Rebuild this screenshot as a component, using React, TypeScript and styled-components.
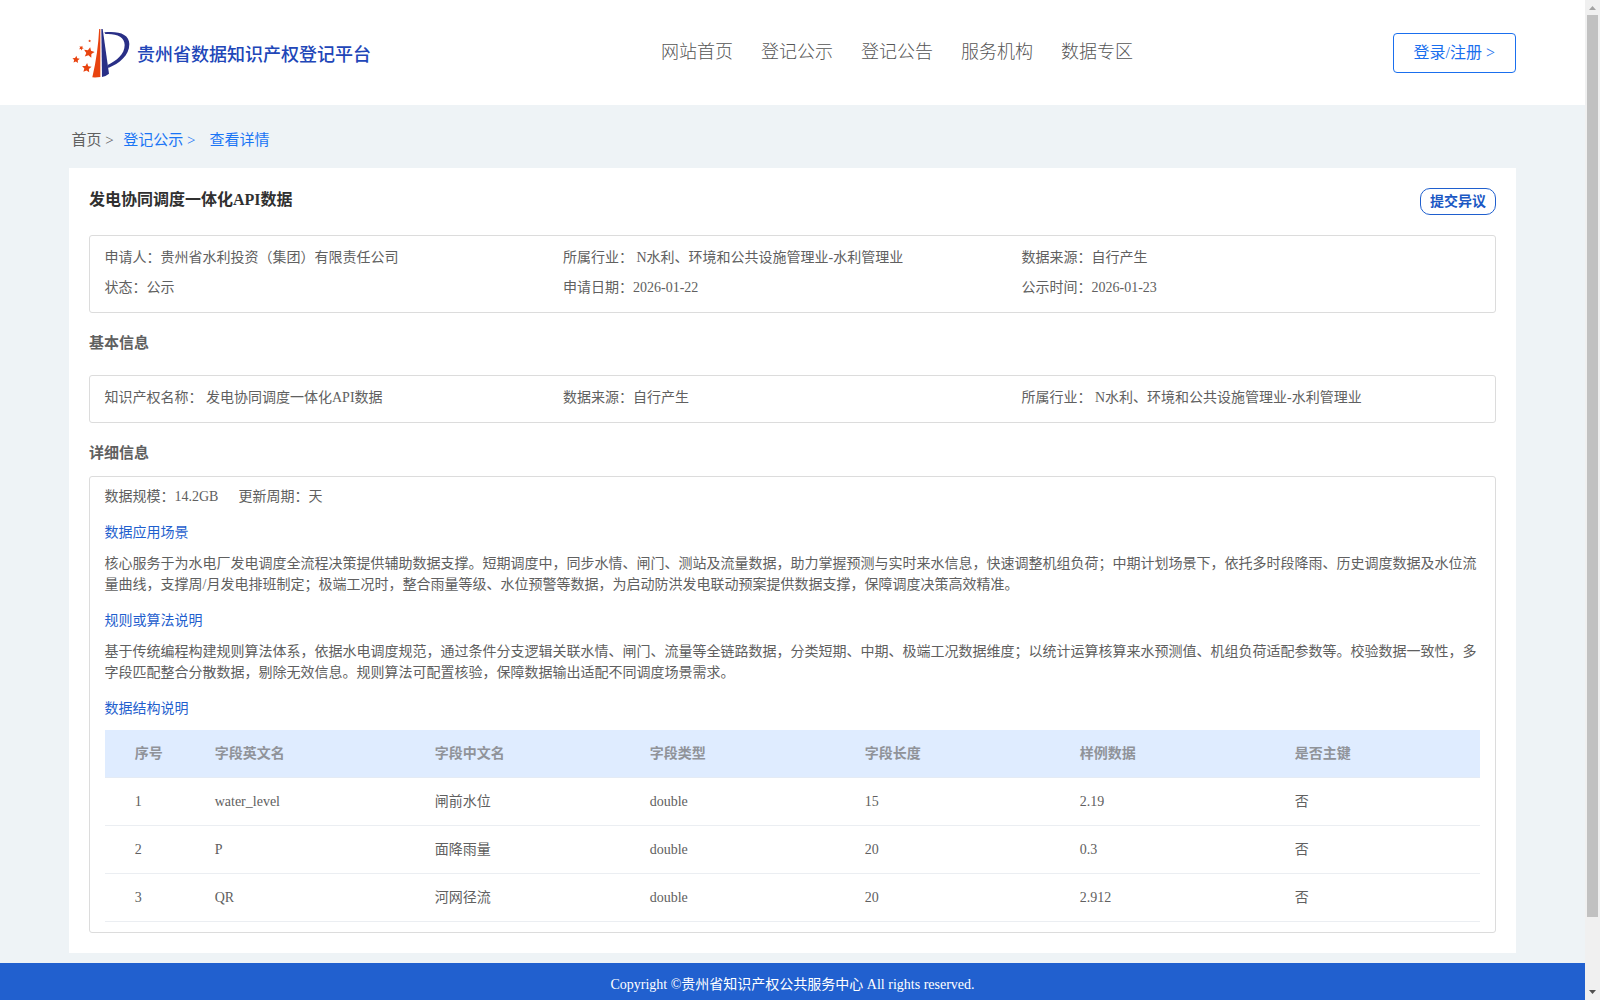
import React from "react";
import styled, { createGlobalStyle } from "styled-components";

const GlobalStyle = createGlobalStyle`
  * { box-sizing: border-box; }
  body {
    margin: 0;
    overflow: hidden;
    font-family: "Liberation Serif", "Noto Sans CJK SC", serif;
    font-size: 14px;
    color: #606060;
    text-spacing-trim: space-all;
  }
`;

const Screen = styled.div`
  display: flex;
  width: 1600px;
  height: 1000px;
  overflow: hidden;
`;

const Page = styled.div`
  display: flex;
  flex-direction: column;
  width: 1585px;
  height: 1000px;
  background: #eef3f6;
`;

const Header = styled.header`
  display: flex;
  justify-content: space-between;
  flex: none;
  height: 105px;
  padding: 0 69px 0 70px;
  background: #fff;
`;

const Brand = styled.div`
  display: flex;
  align-items: center;
  gap: 5px;
  width: 591px;
  height: 104px;
`;

const BrandName = styled.span`
  font-size: 18px;
  font-weight: 500;
  line-height: 24px;
  padding-top: 6px;
  color: #2146b8;
  white-space: nowrap;
`;

const Nav = styled.nav`
  display: flex;
  gap: 28px;
  flex: 1;
  padding-top: 40px;
`;

const NavLink = styled.a`
  font-size: 18px;
  font-weight: 300;
  line-height: 24px;
  color: #555;
`;

const LoginButton = styled.button`
  height: 40px;
  margin-top: 33px;
  padding: 0 20px;
  border: 1px solid #1a6fee;
  border-radius: 4px;
  background: #fff;
  color: #1a6fee;
  font: 400 16px/38px "Liberation Serif", "Noto Sans CJK SC", serif;
  white-space: nowrap;
`;

const Breadcrumb = styled.div`
  display: flex;
  flex: none;
  height: 63px;
  padding: 25px 0 0 71.5px;
  font-size: 15px;
  line-height: 21px;
  white-space: pre;
`;

const Crumb = styled.span<{ $link?: boolean; $gap?: number }>`
  margin-right: ${(p) => p.$gap ?? 0}px;
  color: ${(p) => (p.$link ? "#1a75f5" : "#606060")};
`;

const Card = styled.main`
  flex: none;
  width: 1447px;
  margin: 0 0 10px 69px;
  padding: 20px;
  background: #fff;
`;

const TitleRow = styled.div`
  display: flex;
  justify-content: space-between;
  height: 27px;
  margin-bottom: 20px;
`;

const Title = styled.h1`
  margin: 0;
  font-size: 16px;
  font-weight: 700;
  line-height: 23px;
  color: #303030;
`;

const ObjectionButton = styled.button`
  width: 76px;
  height: 27px;
  padding: 0;
  border: 1px solid #1f5fce;
  border-radius: 10px;
  background: #fff;
  color: #1b58c4;
  font: 700 14px/24px "Liberation Serif", "Noto Sans CJK SC", serif;
`;

const InfoBox = styled.section`
  display: grid;
  grid-template-columns: repeat(3, 1fr);
  padding: 7px 15px 9px 14.5px;
  border: 1px solid #dcdcdc;
  border-radius: 3px;
`;

const InfoItem = styled.div`
  line-height: 30px;
  white-space: pre;
`;

const SectionTitle = styled.h2<{ $bottom: number }>`
  margin: 0 0 ${(p) => p.$bottom}px;
  padding-top: 10px;
  font-size: 15px;
  font-weight: 700;
  line-height: 40px;
`;

const DetailBox = styled.section`
  padding: 5px 15px 10px;
  border: 1px solid #dcdcdc;
  border-radius: 3px;
`;

const MetaRow = styled.div`
  display: flex;
  gap: 20px;
  margin: 0 0 10px -0.5px;
  line-height: 30px;
`;

const SubTitle = styled.h3`
  margin: 0 0 10px -0.5px;
  font-size: 14px;
  font-weight: 400;
  line-height: 21px;
  color: #1f5fce;
`;

const Paragraph = styled.p`
  margin: 0 0 15px -0.5px;
  line-height: 21px;
  white-space: nowrap;
`;

const Table = styled.div`
  width: 1375px;
  margin-top: 11px;
`;

const Row = styled.div<{ $head?: boolean }>`
  display: grid;
  grid-template-columns: 80px 220px repeat(5, 215px);
  height: 48px;
  border-bottom: 1px solid ${(p) => (p.$head ? "#e4ebf5" : "#ebeef2")};
  background: ${(p) => (p.$head ? "#dfecff" : "#fff")};
  color: ${(p) => (p.$head ? "#909399" : "#606060")};
  font-weight: ${(p) => (p.$head ? 700 : 400)};
`;

const Cell = styled.div`
  padding-left: 29.7px;
  line-height: 47px;
`;

const Footer = styled.footer`
  flex: none;
  height: 37px;
  background: #2160cf;
  color: #fff;
  line-height: 43px;
  text-align: center;
`;

const ScrollTrack = styled.div`
  display: flex;
  flex-direction: column;
  align-items: center;
  width: 15px;
  height: 1000px;
  background: #f0f0f0;
`;

const ScrollThumb = styled.div`
  width: 11px;
  height: 902px;
  margin-bottom: 68px;
  background: #c1c1c1;
`;

const ArrowBox = styled.svg`
  display: block;
  flex: none;
  width: 15px;
  height: 15px;
`;

const starPath = (cx: number, cy: number, r: number, turn: number) =>
  Array.from({ length: 10 }, (_, i) => {
    const a = ((turn - 90 + i * 36) * Math.PI) / 180;
    const d = i % 2 ? r * 0.48 : r;
    return `${(cx + d * Math.cos(a)).toFixed(1)},${(cy + d * Math.sin(a)).toFixed(1)}`;
  }).join(" ");

const Logo = () => (
  <svg width="62" height="52" viewBox="30 33 186 156">
    <path d="M117.500 42h3.500v144q-12 2-24 1q17-72 20.500-145z" fill="#e8430f" />
    <g fill="#292f86">
      <path d="M124 42h4L147 176q-8 7-21 10z" />
      <path d="M133 52C175 47 208 57 208 87C208 122 178 145 145 159L143 150C170 137 194 118 194 90C194 65 170 55 136 57z" />
    </g>
    <g fill="#e8430f">
      <polygon points={starPath(87, 113, 17, 12)} />
      <polygon points={starPath(80, 159, 15, 5)} />
      <polygon points={starPath(48, 134, 11.5, 5)} />
      <polygon points={starPath(64, 99, 7.5, 25)} />
      <polygon points={starPath(89, 78, 4.5, 10)} />
    </g>
  </svg>
);

const navItems = ["网站首页", "登记公示", "登记公告", "服务机构", "数据专区"];

const summary = [
  "申请人：贵州省水利投资（集团）有限责任公司",
  "所属行业： N水利、环境和公共设施管理业-水利管理业",
  "数据来源：自行产生",
  "状态：公示",
  "申请日期：2026-01-22",
  "公示时间：2026-01-23",
];

const basics = [
  "知识产权名称： 发电协同调度一体化API数据",
  "数据来源：自行产生",
  "所属行业： N水利、环境和公共设施管理业-水利管理业",
];

const columns = ["序号", "字段英文名", "字段中文名", "字段类型", "字段长度", "样例数据", "是否主键"];

const fields = [
  ["1", "water_level", "闸前水位", "double", "15", "2.19", "否"],
  ["2", "P", "面降雨量", "double", "20", "0.3", "否"],
  ["3", "QR", "河网径流", "double", "20", "2.912", "否"],
];

export default function App() {
  return (
    <>
      <GlobalStyle />
      <Screen>
        <Page>
          <Header>
            <Brand>
              <Logo />
              <BrandName>贵州省数据知识产权登记平台</BrandName>
            </Brand>
            <Nav>
              {navItems.map((item) => (
                <NavLink key={item}>{item}</NavLink>
              ))}
            </Nav>
            <LoginButton>登录/注册 &gt;</LoginButton>
          </Header>
          <Breadcrumb>
            <Crumb $gap={9.5}>首页 &gt;</Crumb>
            <Crumb $link $gap={14}>登记公示 &gt;</Crumb>
            <Crumb $link>查看详情</Crumb>
          </Breadcrumb>
          <Card>
            <TitleRow>
              <Title>发电协同调度一体化API数据</Title>
              <ObjectionButton>提交异议</ObjectionButton>
            </TitleRow>
            <InfoBox>
              {summary.map((item) => (
                <InfoItem key={item}>{item}</InfoItem>
              ))}
            </InfoBox>
            <SectionTitle $bottom={12}>基本信息</SectionTitle>
            <InfoBox>
              {basics.map((item) => (
                <InfoItem key={item}>{item}</InfoItem>
              ))}
            </InfoBox>
            <SectionTitle $bottom={3}>详细信息</SectionTitle>
            <DetailBox>
              <MetaRow>
                <span>数据规模：14.2GB</span>
                <span>更新周期：天</span>
              </MetaRow>
              <SubTitle>数据应用场景</SubTitle>
              <Paragraph>
                核心服务于为水电厂发电调度全流程决策提供辅助数据支撑。短期调度中，同步水情、闸门、测站及流量数据，助力掌握预测与实时来水信息，快速调整机组负荷；中期计划场景下，依托多时段降雨、历史调度数据及水位流
                <br />
                量曲线，支撑周/月发电排班制定；极端工况时，整合雨量等级、水位预警等数据，为启动防洪发电联动预案提供数据支撑，保障调度决策高效精准。
              </Paragraph>
              <SubTitle>规则或算法说明</SubTitle>
              <Paragraph>
                基于传统编程构建规则算法体系，依据水电调度规范，通过条件分支逻辑关联水情、闸门、流量等全链路数据，分类短期、中期、极端工况数据维度；以统计运算核算来水预测值、机组负荷适配参数等。校验数据一致性，多
                <br />
                字段匹配整合分散数据，剔除无效信息。规则算法可配置核验，保障数据输出适配不同调度场景需求。
              </Paragraph>
              <SubTitle>数据结构说明</SubTitle>
              <Table>
                <Row $head>
                  {columns.map((c) => (
                    <Cell key={c}>{c}</Cell>
                  ))}
                </Row>
                {fields.map((row) => (
                  <Row key={row[0]}>
                    {row.map((value, i) => (
                      <Cell key={i}>{value}</Cell>
                    ))}
                  </Row>
                ))}
              </Table>
            </DetailBox>
          </Card>
          <Footer>Copyright ©贵州省知识产权公共服务中心 All rights reserved.</Footer>
        </Page>
        <ScrollTrack>
          <ArrowBox viewBox="0 0 15 15">
            <path d="M4 10L7.5 6L11 10z" fill="#a3a3a3" />
          </ArrowBox>
          <ScrollThumb />
          <ArrowBox viewBox="0 0 15 15">
            <path d="M4 5L7.5 9L11 5z" fill="#505050" />
          </ArrowBox>
        </ScrollTrack>
      </Screen>
    </>
  );
}
